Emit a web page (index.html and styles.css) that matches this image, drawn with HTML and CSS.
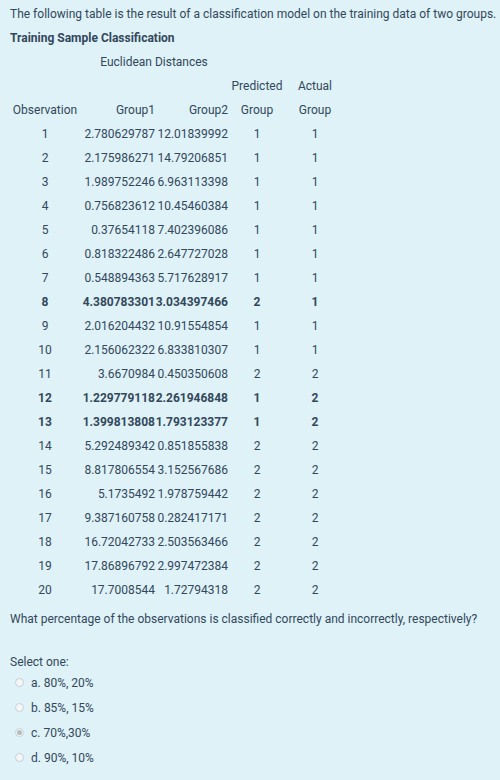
FILE: index.html
```html
<!DOCTYPE html>
<html>
<head>
<meta charset="utf-8">
<link rel="stylesheet" href="styles.css">
</head>
<body>
<div class="formulation">
  <p class="line">The following table is the result of a classification model on the training data of two groups.</p>
  <p class="line strong">Training Sample Classification</p>
  <table class="data">
    <colgroup>
      <col class="w-obs"><col class="w-g1"><col class="w-g2"><col class="w-pred"><col class="w-act">
    </colgroup>
    <tr><td></td><td colspan="2" class="c">Euclidean Distances</td><td></td><td></td></tr>
    <tr><td></td><td></td><td></td><td class="c">Predicted</td><td class="c">Actual</td></tr>
    <tr><td class="c">Observation</td><td class="r">Group1</td><td class="r">Group2</td><td class="c">Group</td><td class="c">Group</td></tr>
    <tr><td class="c">1</td><td class="r">2.780629787</td><td class="r">12.01839992</td><td class="c">1</td><td class="c">1</td></tr>
    <tr><td class="c">2</td><td class="r">2.175986271</td><td class="r">14.79206851</td><td class="c">1</td><td class="c">1</td></tr>
    <tr><td class="c">3</td><td class="r">1.989752246</td><td class="r">6.963113398</td><td class="c">1</td><td class="c">1</td></tr>
    <tr><td class="c">4</td><td class="r">0.756823612</td><td class="r">10.45460384</td><td class="c">1</td><td class="c">1</td></tr>
    <tr><td class="c">5</td><td class="r">0.37654118</td><td class="r">7.402396086</td><td class="c">1</td><td class="c">1</td></tr>
    <tr><td class="c">6</td><td class="r">0.818322486</td><td class="r">2.647727028</td><td class="c">1</td><td class="c">1</td></tr>
    <tr><td class="c">7</td><td class="r">0.548894363</td><td class="r">5.717628917</td><td class="c">1</td><td class="c">1</td></tr>
    <tr class="b"><td class="c">8</td><td class="r">4.380783301</td><td class="r">3.034397466</td><td class="c">2</td><td class="c">1</td></tr>
    <tr><td class="c">9</td><td class="r">2.016204432</td><td class="r">10.91554854</td><td class="c">1</td><td class="c">1</td></tr>
    <tr><td class="c">10</td><td class="r">2.156062322</td><td class="r">6.833810307</td><td class="c">1</td><td class="c">1</td></tr>
    <tr><td class="c">11</td><td class="r">3.6670984</td><td class="r">0.450350608</td><td class="c">2</td><td class="c">2</td></tr>
    <tr class="b"><td class="c">12</td><td class="r">1.229779118</td><td class="r">2.261946848</td><td class="c">1</td><td class="c">2</td></tr>
    <tr class="b"><td class="c">13</td><td class="r">1.399813808</td><td class="r">1.793123377</td><td class="c">1</td><td class="c">2</td></tr>
    <tr><td class="c">14</td><td class="r">5.292489342</td><td class="r">0.851855838</td><td class="c">2</td><td class="c">2</td></tr>
    <tr><td class="c">15</td><td class="r">8.817806554</td><td class="r">3.152567686</td><td class="c">2</td><td class="c">2</td></tr>
    <tr><td class="c">16</td><td class="r">5.1735492</td><td class="r">1.978759442</td><td class="c">2</td><td class="c">2</td></tr>
    <tr><td class="c">17</td><td class="r">9.387160758</td><td class="r">0.282417171</td><td class="c">2</td><td class="c">2</td></tr>
    <tr><td class="c">18</td><td class="r">16.72042733</td><td class="r">2.503563466</td><td class="c">2</td><td class="c">2</td></tr>
    <tr><td class="c">19</td><td class="r">17.86896792</td><td class="r">2.997472384</td><td class="c">2</td><td class="c">2</td></tr>
    <tr><td class="c">20</td><td class="r">17.7008544</td><td class="r">1.72794318</td><td class="c">2</td><td class="c">2</td></tr>
  </table>
  <p class="line question">What percentage of the observations is classified correctly and incorrectly, respectively?</p>
  <div class="ablock">
    <div class="prompt">Select one:</div>
    <div class="answer">
      <div class="opt"><span class="radio"></span><span>a. 80%, 20%</span></div>
      <div class="opt"><span class="radio"></span><span>b. 85%, 15%</span></div>
      <div class="opt"><span class="radio checked"></span><span>c. 70%,30%</span></div>
      <div class="opt"><span class="radio"></span><span>d. 90%, 10%</span></div>
    </div>
  </div>
</div>
</body>
</html>
```
FILE: styles.css
```css
html, body {
  margin: 0;
  padding: 0;
  background: #def2f8;
}
body {
  font-family: Roboto, "Noto Sans", sans-serif;
  font-size: 12px;
  color: #33475b;
}
.formulation {
  padding: 2px 0 0 10px;
}
.line {
  margin: 0;
  line-height: 24px;
  white-space: nowrap;
}
.strong {
  font-weight: bold;
}
.data {
  border-collapse: collapse;
  table-layout: fixed;
  width: 334px;
  margin: 0;
}
.w-obs { width: 70px; }
.w-g1 { width: 75px; }
.w-g2 { width: 73px; }
.w-pred { width: 58px; }
.w-act { width: 58px; }
.data td {
  padding: 0;
  height: 24px;
  line-height: 24px;
  white-space: nowrap;
}
.data td.c { text-align: center; }
.data td.r { text-align: right; }
.data tr.b td { font-weight: bold; }
.question {
  margin-top: 5px;
}
.ablock {
  margin-top: 23px;
}
.prompt {
  line-height: 16px;
}
.opt {
  display: flex;
  align-items: center;
  height: 25px;
  gap: 7px;
  padding-left: 5px;
}
.radio {
  width: 9px;
  height: 9px;
  border: 1px solid #c8cfd3;
  border-radius: 50%;
  background: #f4f7f8;
  box-sizing: border-box;
  display: inline-flex;
  align-items: center;
  justify-content: center;
}
.radio.checked::after {
  content: "";
  width: 5px;
  height: 5px;
  border-radius: 50%;
  background: #b5bcc0;
}
```
